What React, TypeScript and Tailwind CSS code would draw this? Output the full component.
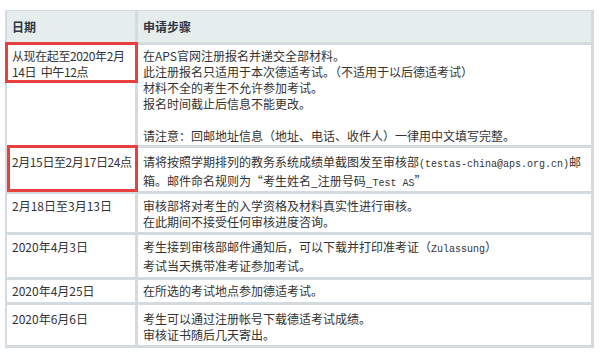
const font = { fontFamily: '"Noto Sans CJK SC", "Liberation Sans", sans-serif' };

function Mono({ children }: { children: React.ReactNode }) {
  return <span className="font-['Liberation_Mono',monospace] text-[10px]">{children}</span>;
}

const rows: { date: React.ReactNode; steps: React.ReactNode; h: string; pt: string; box?: string }[] = [
  {
    date: (
      <span className="tracking-[-0.4px]">
        从现在起至2020年2月
        <br />
        14日&nbsp; 中午12点
      </span>
    ),
    steps: (
      <>
        在APS官网注册报名并递交全部材料。
        <br />
        此注册报名只适用于本次德适考试。（不适用于以后德适考试）
        <br />
        材料不全的考生不允许参加考试。
        <br />
        报名时间截止后信息不能更改。
        <br />
        <br />
        请注意：回邮地址信息（地址、电话、收件人）一律用中文填写完整。
      </>
    ),
    h: 'h-[100px]',
    pt: 'pt-[3px]',
    box: 'left-[-2px] top-[-3px] w-[133px] h-[41px]',
  },
  {
    date: <span className="tracking-[-0.4px]">2月15日至2月17日24点</span>,
    steps: (
      <>
        请将按照学期排列的教务系统成绩单截图发至审核部<Mono>(testas-china@aps.org.cn)</Mono>邮
        <br />
        箱。邮件命名规则为“考生姓名_注册号码_<Mono>Test AS</Mono>”
      </>
    ),
    h: 'h-[43px]',
    pt: 'pt-[6px]',
    box: 'left-[0px] top-[-3px] w-[131px] h-[47px]',
  },
  {
    date: '2月18日至3月13日',
    steps: (
      <>
        审核部将对考生的入学资格及材料真实性进行审核。
        <br />
        在此期间不接受任何审核进度咨询。
      </>
    ),
    h: 'h-[38px]',
    pt: 'pt-[4px]',
  },
  {
    date: '2020年4月3日',
    steps: (
      <>
        考生接到审核部邮件通知后，可以下载并打印准考证（<Mono>Zulassung</Mono>）
        <br />
        考试当天携带准考证参加考试。
      </>
    ),
    h: 'h-[42px]',
    pt: 'pt-[4px]',
  },
  {
    date: '2020年4月25日',
    steps: '在所选的考试地点参加德适考试。',
    h: 'h-[22px]',
    pt: 'pt-[3px]',
  },
  {
    date: '2020年6月6日',
    steps: (
      <>
        考生可以通过注册帐号下载德适考试成绩。
        <br />
        审核证书随后几天寄出。
      </>
    ),
    h: 'h-[40px]',
    pt: 'pt-[6px]',
  },
];

export default function App() {
  return (
    <div className="w-[605px] h-[357px] bg-white pt-[10px] pl-[5px]" style={font}>
      <div className="w-[589px] bg-[#d3dae0] pt-[1px] pl-[2px] pr-[3px] pb-[3px] grid grid-cols-[128px_1fr] gap-[3px] text-[12px] leading-[16px] text-[#333]">
        <div className="h-[31px] bg-[#e5eeed] flex items-center pl-[5px] font-bold text-[12px] text-[#2f3542]">日期</div>
        <div className="h-[31px] bg-[#e5eeed] flex items-center pl-[5px] font-bold text-[12px] text-[#2f3542]">申请步骤</div>
        {rows.map((r, i) => (
          <div key={i} className="contents">
            <div className={`relative bg-white pl-[5px] whitespace-nowrap ${r.h} ${r.pt}`}>
              {r.date}
              {r.box && <div className={`absolute border-[3px] border-[#e8403f] ${r.box}`} />}
            </div>
            <div className={`bg-white pl-[5px] whitespace-nowrap ${r.h} ${r.pt}`}>{r.steps}</div>
          </div>
        ))}
      </div>
    </div>
  );
}
